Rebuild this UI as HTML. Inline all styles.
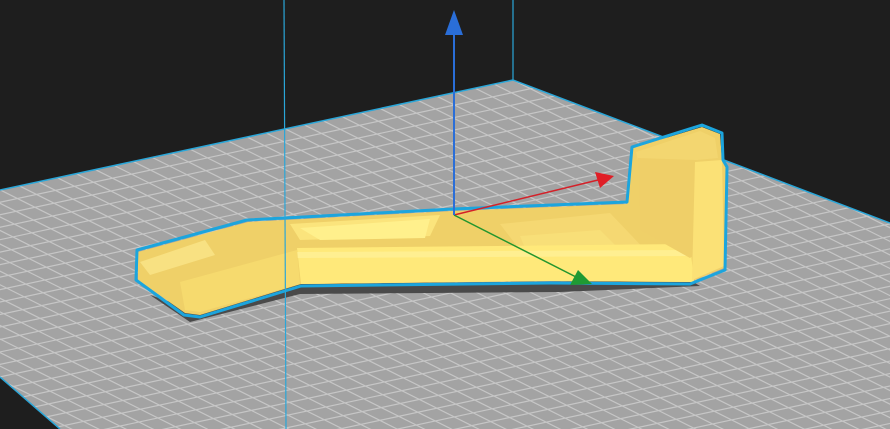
<!DOCTYPE html>
<html><head><meta charset="utf-8"><style>
html,body{margin:0;padding:0;background:#1e1e1e;width:890px;height:429px;overflow:hidden}
svg{display:block;position:absolute;left:0;top:0}
</style></head><body>
<svg id="s" width="890" height="429" viewBox="0 0 890 429" xmlns="http://www.w3.org/2000/svg">
<defs>
<clipPath id="pc"><polygon points="0,190 513,80 890,223 890,429 60,429 0,377"/></clipPath>
</defs>
<rect width="890" height="429" fill="#1e1e1e"/>
<polygon points="0,190 513,80 890,223 890,429 60,429 0,377" fill="#a3a3a3"/>
<g id="grid" clip-path="url(#pc)" stroke="#c6c6c6" stroke-width="1.2"></g>
<polyline points="0,190 513,80 890,223" fill="none" stroke="#2aa6d8" stroke-width="1.5"/>
<polyline points="0,377 60,429" fill="none" stroke="#2aa6d8" stroke-width="1.5"/>
<line x1="513" y1="0" x2="513" y2="80" stroke="#2aa6d8" stroke-width="1.2"/>
<polygon points="150,295 190,322 300,294 560,292 700,286 690,280 300,284 200,312" fill="#4a4a4a"/>
<polygon points="138,252 248,222 453,211 627,204 633,148 702,127 720,134 722,160 726,168 724,268 690,282 550,281 301,284 200,315 185,313 138,280" fill="#efd068"/>
<polygon points="290,224 440,215 430,236 300,240" fill="#fbe47c"/>
<polygon points="500,224 610,213 650,255 520,250" fill="#f5d872"/>
<polygon points="300,228 430,219 425,238 320,240" fill="#fff08c"/>
<polygon points="520,236 600,230 615,245 525,248" fill="#f8df78"/>
<polygon points="297,248 690,244 694,282 550,281 301,284" fill="#ffe97a"/>
<polygon points="297,252 690,250 690,256 297,258" fill="#fff3a0" opacity="0.6"/>
<polygon points="180,282 297,250 300,284 200,312 185,310" fill="#f6da6e"/>
<polygon points="140,262 205,240 215,255 150,275" fill="#f8e182"/>
<polygon points="636,152 700,131 715,138 718,158 697,160 640,170" fill="#f3d670"/>
<polygon points="638,158 696,160 700,250 690,258 640,230" fill="#efcf68"/>
<polygon points="695,162 722,160 724,266 692,280" fill="#fbe176"/>
<polygon points="137,250 247,220 453,209 627,202 632,147 702,125 722,133 723,160 727,167 725,270 690,284 550,283 301,286 200,317 184,315 136,280" fill="none" stroke="#1ca5dd" stroke-width="3" stroke-linejoin="round"/>
<line x1="284" y1="0" x2="286" y2="429" stroke="#2aa6d8" stroke-width="1.2"/>
<line x1="454" y1="215" x2="598" y2="180" stroke="#d42028" stroke-width="1.5"/>
<polygon points="595,172 614,176 600,188" fill="#e01e26"/>
<line x1="454" y1="215" x2="578" y2="278" stroke="#22952e" stroke-width="1.5"/>
<polygon points="570,285 578,270 592,284" fill="#1f9a33"/>
<line x1="454" y1="35" x2="454" y2="215" stroke="#2a6ed8" stroke-width="2"/>
<polygon points="454,10 445,35 463,35" fill="#2a6ed8"/>
</svg>
<script>
var g=document.getElementById('grid'),ns='http://www.w3.org/2000/svg';
function L(x1,y1,x2,y2){var l=document.createElementNS(ns,'line');l.setAttribute('x1',x1);l.setAttribute('y1',y1);l.setAttribute('x2',x2);l.setAttribute('y2',y2);g.appendChild(l);}
for(var i=-5;i<50;i++){var ox=513+i*21,oy=80+i*21*0.38;L(ox-1200,oy+1200*0.214,ox+1200,oy-1200*0.214);}
for(var j=-5;j<50;j++){var ox=513-j*19,oy=80+j*19*0.214;L(ox-900,oy-900*0.5,ox+900,oy+900*0.5);}
</script>
</body></html>
